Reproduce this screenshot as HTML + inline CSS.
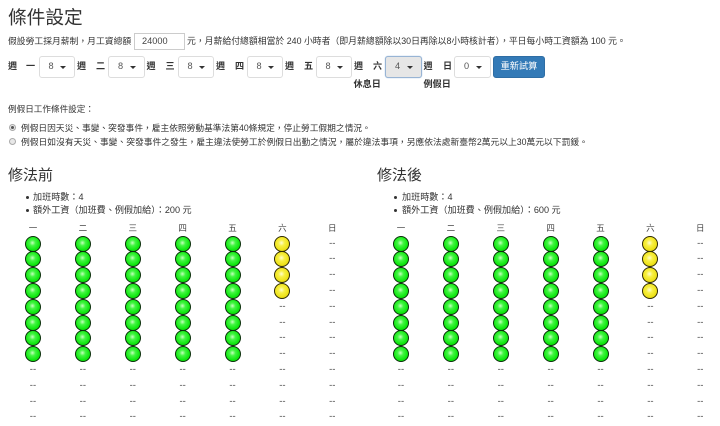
<!DOCTYPE html>
<html lang="zh-Hant">
<head>
<meta charset="utf-8">
<style>
html,body{margin:0;padding:0;background:#fff}
body{width:720px;height:426px;position:relative;overflow:hidden;font-family:"Liberation Sans","Noto Sans CJK TC",sans-serif;color:#333;font-size:9.1px;filter:blur(.3px)}
.t{position:absolute;white-space:nowrap;line-height:12px}
.h{position:absolute;white-space:nowrap;font-weight:400;color:#333}
.b{font-weight:700}
.s{position:absolute;top:56px;height:21.5px;width:36.5px;box-sizing:border-box;border:1px solid #ddd;border-radius:3px;background:#fff;font-size:9.2px;color:#555;line-height:19.5px;padding-left:9px}
.s:after{content:"";position:absolute;right:8px;top:8.5px;border-left:3px solid transparent;border-right:3px solid transparent;border-top:3px solid #333}
.s.a{background:#e6e6e6;border-color:#98b4d4;box-shadow:0 0 1px #8fb3dc}
.in{position:absolute;left:134px;top:33px;width:51px;height:17px;box-sizing:border-box;border:1px solid #ccc;font-size:9.2px;color:#444;line-height:15px;padding-left:7px;background:#fff}
.btn{position:absolute;left:493px;top:56px;width:52px;height:21.5px;background:#337ab7;border:1px solid #2e6da4;box-sizing:border-box;border-radius:3px;color:#fff;text-align:center;line-height:19.5px;font-size:9.2px}
.r{position:absolute;left:9px;width:7px;height:7px;border-radius:50%;box-sizing:border-box;border:1px solid #aaa;background:#e8e8e8}
.r.on:after{content:"";position:absolute;left:1px;top:1px;width:3px;height:3px;border-radius:50%;background:#555}
.d{position:absolute;width:3px;height:3px;border-radius:50%;background:#333}
.g{position:absolute;top:219.8px;display:grid;grid-template-columns:repeat(7,49.9px);grid-auto-rows:15.8px;text-align:center;line-height:15.8px;font-size:9.5px;color:#444}
.g span{display:block}
.g .hd{color:#444;font-weight:400;font-size:8.5px;position:relative;top:1px}
.g i{display:block;margin:0 auto;width:16px;height:16px;box-sizing:border-box;border-radius:50%;border:1.3px solid #0a2f0a;background:radial-gradient(circle at 46% 42%,#c8ffc0 0,#44f544 26%,#10e810 62%,#0cbc0c 100%)}
.g i.y{border-color:#2e2a04;background:radial-gradient(circle at 46% 42%,#fffdd0 0,#f8f044 28%,#efe31a 62%,#c4b40c 100%)}
</style>
</head>
<body>
<div class="h" style="left:8px;top:5px;font-size:18.7px;line-height:25px">條件設定</div>

<div class="t" style="left:8px;top:35px;font-size:8.8px">假設勞工採月薪制，月工資總額</div>
<div class="in">24000</div>
<div class="t" style="left:187px;top:35px;font-size:8.85px">元，月薪給付總額相當於 240 小時者（即月薪總額除以30日再除以8小時核計者），平日每小時工資額為 100 元。</div>

<div class="t b" style="left:8px;top:60px">週</div><div class="t b" style="left:26px;top:60px">一</div>
<div class="s" style="left:38.5px">8</div>
<div class="t b" style="left:77px;top:60px">週</div><div class="t b" style="left:96px;top:60px">二</div>
<div class="s" style="left:108px">8</div>
<div class="t b" style="left:146.5px;top:60px">週</div><div class="t b" style="left:165.5px;top:60px">三</div>
<div class="s" style="left:177.5px">8</div>
<div class="t b" style="left:216px;top:60px">週</div><div class="t b" style="left:235px;top:60px">四</div>
<div class="s" style="left:246.5px">8</div>
<div class="t b" style="left:285px;top:60px">週</div><div class="t b" style="left:304px;top:60px">五</div>
<div class="s" style="left:315.5px">8</div>
<div class="t b" style="left:354px;top:60px">週</div><div class="t b" style="left:373px;top:60px">六</div>
<div class="s a" style="left:385px">4</div>
<div class="t b" style="left:423.5px;top:60px">週</div><div class="t b" style="left:443px;top:60px">日</div>
<div class="s" style="left:454px">0</div>
<div class="btn">重新試算</div>
<div class="t b" style="left:353.5px;top:78px">休息日</div>
<div class="t b" style="left:423.5px;top:78px">例假日</div>

<div class="t" style="left:8px;top:103px;font-size:8.6px">例假日工作條件設定：</div>
<div class="r on" style="top:124px"></div>
<div class="t" style="left:21px;top:122px;font-size:8.72px">例假日因天災、事變、突發事件，雇主依照勞動基準法第40條規定，停止勞工假期之情況。</div>
<div class="r" style="top:138px"></div>
<div class="t" style="left:21px;top:136px;font-size:8.78px">例假日如沒有天災、事變、突發事件之發生，雇主違法使勞工於例假日出勤之情況，屬於違法事項，另應依法處新臺幣2萬元以上30萬元以下罰鍰。</div>

<div class="h" style="left:8px;top:166px;font-size:15px;line-height:20px">修法前</div>
<div class="d" style="left:26px;top:196px"></div>
<div class="t" style="left:33px;top:191px">加班時數：4</div>
<div class="d" style="left:26px;top:209px"></div>
<div class="t" style="left:33px;top:204px">額外工資（加班費、例假加給）：200 元</div>

<div class="h" style="left:377px;top:166px;font-size:15px;line-height:20px">修法後</div>
<div class="d" style="left:394px;top:196px"></div>
<div class="t" style="left:402px;top:191px">加班時數：4</div>
<div class="d" style="left:394px;top:209px"></div>
<div class="t" style="left:402px;top:204px">額外工資（加班費、例假加給）：600 元</div>

<div class="g" style="left:8px">
<span class="hd">一</span><span class="hd">二</span><span class="hd">三</span><span class="hd">四</span><span class="hd">五</span><span class="hd">六</span><span class="hd">日</span>
<i></i><i></i><i></i><i></i><i></i><i class="y"></i><span>--</span>
<i></i><i></i><i></i><i></i><i></i><i class="y"></i><span>--</span>
<i></i><i></i><i></i><i></i><i></i><i class="y"></i><span>--</span>
<i></i><i></i><i></i><i></i><i></i><i class="y"></i><span>--</span>
<i></i><i></i><i></i><i></i><i></i><span>--</span><span>--</span>
<i></i><i></i><i></i><i></i><i></i><span>--</span><span>--</span>
<i></i><i></i><i></i><i></i><i></i><span>--</span><span>--</span>
<i></i><i></i><i></i><i></i><i></i><span>--</span><span>--</span>
<span>--</span><span>--</span><span>--</span><span>--</span><span>--</span><span>--</span><span>--</span>
<span>--</span><span>--</span><span>--</span><span>--</span><span>--</span><span>--</span><span>--</span>
<span>--</span><span>--</span><span>--</span><span>--</span><span>--</span><span>--</span><span>--</span>
<span>--</span><span>--</span><span>--</span><span>--</span><span>--</span><span>--</span><span>--</span>
</div>

<div class="g" style="left:376px">
<span class="hd">一</span><span class="hd">二</span><span class="hd">三</span><span class="hd">四</span><span class="hd">五</span><span class="hd">六</span><span class="hd">日</span>
<i></i><i></i><i></i><i></i><i></i><i class="y"></i><span>--</span>
<i></i><i></i><i></i><i></i><i></i><i class="y"></i><span>--</span>
<i></i><i></i><i></i><i></i><i></i><i class="y"></i><span>--</span>
<i></i><i></i><i></i><i></i><i></i><i class="y"></i><span>--</span>
<i></i><i></i><i></i><i></i><i></i><span>--</span><span>--</span>
<i></i><i></i><i></i><i></i><i></i><span>--</span><span>--</span>
<i></i><i></i><i></i><i></i><i></i><span>--</span><span>--</span>
<i></i><i></i><i></i><i></i><i></i><span>--</span><span>--</span>
<span>--</span><span>--</span><span>--</span><span>--</span><span>--</span><span>--</span><span>--</span>
<span>--</span><span>--</span><span>--</span><span>--</span><span>--</span><span>--</span><span>--</span>
<span>--</span><span>--</span><span>--</span><span>--</span><span>--</span><span>--</span><span>--</span>
<span>--</span><span>--</span><span>--</span><span>--</span><span>--</span><span>--</span><span>--</span>
</div>
</body>
</html>
